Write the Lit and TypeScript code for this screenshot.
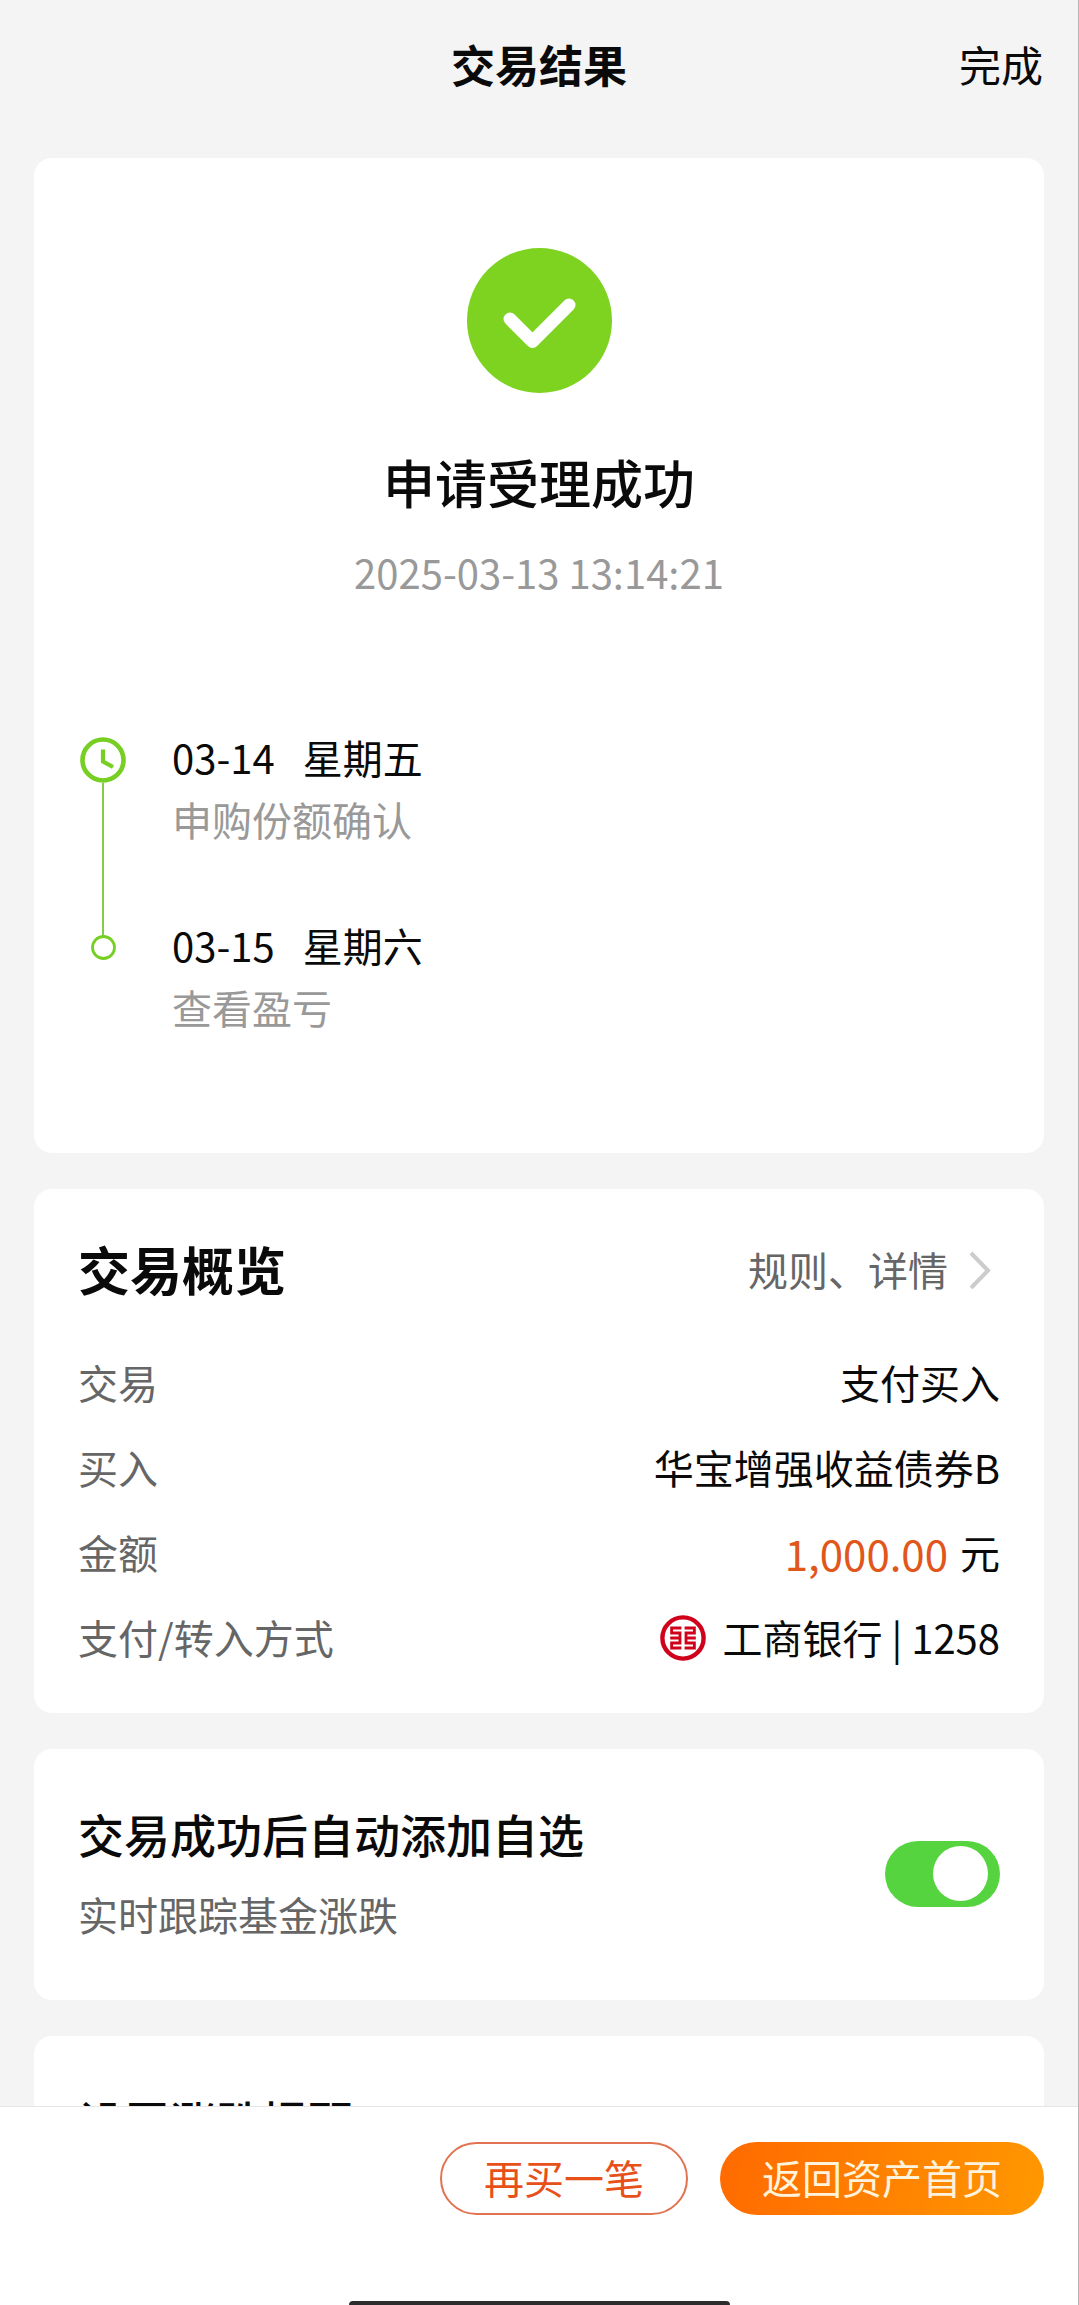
import { LitElement, html, css } from "lit";
import { customElement, state } from "lit/decorators.js";

interface TimelineStep {
  date: string;
  weekday: string;
  note: string;
}

const STEPS: TimelineStep[] = [
  { date: "03-14", weekday: "星期五", note: "申购份额确认" },
  { date: "03-15", weekday: "星期六", note: "查看盈亏" },
];

const successIcon = html`<svg class="success" viewBox="0 0 145 145" aria-hidden="true">
  <circle cx="72.5" cy="72.5" r="72.5" fill="#7ed321" />
  <path d="M43 71 65.5 93.5 102 57" fill="none" stroke="#fff" stroke-width="13" stroke-linecap="round" stroke-linejoin="round" />
</svg>`;

const clockIcon = html`<svg class="clock" viewBox="0 0 46 46" aria-hidden="true">
  <circle cx="23" cy="23" r="20.5" fill="none" stroke="#76cf22" stroke-width="4.6" />
  <path d="M23 12.5V24.5L33 30" fill="none" stroke="#76cf22" stroke-width="4.2" />
</svg>`;

const dotIcon = html`<svg class="dot" viewBox="0 0 25 25" aria-hidden="true">
  <circle cx="12.5" cy="12.5" r="11" fill="none" stroke="#76cf22" stroke-width="2.8" />
</svg>`;

const bankIcon = html`<svg class="bank" viewBox="0 0 46 46" aria-hidden="true">
  <circle cx="23" cy="23" r="20.6" fill="none" stroke="#d0021b" stroke-width="4.4" />
  <g fill="none" stroke="#d0021b" stroke-width="2.8">
    <path d="M21.4 13H11.6V18H20V28H11.6V33H21.4" />
    <path d="M24.6 13H34.4V18H26V28H34.4V33H24.6" />
    <path d="M10.2 23H20M26 23H35.8" />
  </g>
</svg>`;

@customElement("app-root")
export class AppRoot extends LitElement {
  @state() private autoWatch = true;

  static styles = css`
    :host {
      display: block;
      font-family: "Noto Sans CJK SC", "Noto Sans", sans-serif;
      font-size: 40px;
      line-height: 60px;
      color: #0a0a0a;
    }
    *, *::before, *::after { box-sizing: border-box; }
    h1, h2, h3, p, ol, dl, dd { margin: 0; padding: 0; }
    button { font: inherit; color: inherit; background: none; border: 0; padding: 0; margin: 0; cursor: pointer; }
    svg { display: block; flex: none; }

    .page {
      display: flex;
      flex-direction: column;
      height: 100vh;
      background: #f4f4f4;
      border-right: 1px solid #b4b4b4;
    }
    .header {
      flex: none;
      display: grid;
      grid-template-columns: 1fr auto 1fr;
      align-items: center;
      height: 127px;
      padding: 0 35px;
    }
    .header h1 { grid-column: 2; font-size: 44px; font-weight: 700; }
    .done { justify-self: end; font-size: 42px; }

    .content {
      flex: 1;
      min-height: 0;
      overflow-y: auto;
      scrollbar-width: none;
      display: flex;
      flex-direction: column;
      gap: 36px;
      padding: 31px 34px 36px;
    }
    .card { flex: none; background: #fff; border-radius: 18px; }

    .result {
      display: flex;
      flex-direction: column;
      align-items: center;
      padding: 90px 46px 115px;
    }
    .success { width: 145px; height: 145px; }
    .result h2 { margin-top: 59px; font-size: 52px; font-weight: 500; }
    .time { margin-top: 30px; font-size: 40px; color: #999; }
    .timeline { align-self: stretch; display: flex; gap: 46px; margin-top: 124px; line-height: 62px; }
    .track {
      flex: none;
      display: flex;
      flex-direction: column;
      align-items: center;
      width: 46px;
      padding: 11px 0 78px;
    }
    .clock { width: 46px; height: 46px; }
    .line { flex: 1; width: 2px; background: #86cb46; }
    .dot { width: 25px; height: 25px; }
    .steps { list-style: none; display: flex; flex-direction: column; gap: 64px; }
    .when { display: flex; gap: 28px; }
    .note { color: #999; }

    .overview { padding: 43px 44px 33px; }
    .overview-head { display: flex; align-items: center; justify-content: space-between; margin-bottom: 34px; line-height: 74px; }
    .overview-head h2 { font-size: 52px; font-weight: 700; }
    .detail { display: flex; align-items: center; gap: 20px; padding-right: 8px; color: #666; text-decoration: none; }
    .chevron { width: 24px; height: 40px; }
    .row { display: flex; align-items: center; justify-content: space-between; line-height: 85px; }
    .row dt { color: #666; }
    .row dd { display: flex; align-items: center; }
    .amount { margin-right: 12px; font-size: 42px; color: #e0561b; }
    .bank { width: 46px; height: 46px; margin-right: 16px; }

    .setting { display: flex; align-items: center; justify-content: space-between; padding: 54px 44px 56px; }
    .setting h3 { margin-bottom: 21px; font-size: 46px; font-weight: 500; }
    .setting p { color: #666; }
    .switch {
      appearance: none;
      flex: none;
      display: flex;
      align-items: center;
      width: 115px;
      height: 66px;
      margin: 0;
      padding: 0 12px;
      border-radius: 33px;
      background: #ddd;
      cursor: pointer;
    }
    .switch::before { content: ""; width: 55px; height: 55px; border-radius: 50%; background: #fff; }
    .switch:checked { justify-content: flex-end; background: #55d43f; }

    .footer { flex: none; background: #fff; border-top: 1px solid #e6e6e6; }
    .actions { display: flex; justify-content: flex-end; gap: 32px; padding: 35px 34px 86px; }
    .btn { display: flex; align-items: center; height: 73px; padding: 0 42px 4px; border-radius: 37px; line-height: 60px; }
    .again { border: 2px solid #e27352; color: #e8501a; }
    .home { background: linear-gradient(100deg, #ff6a00, #ff9800); color: #fff3dc; }
    .indicator { width: 381px; height: 4px; margin: 0 auto; border-radius: 4px 4px 0 0; background: #2c2c2e; }
  `;

  private toggle(e: Event) {
    this.autoWatch = (e.target as HTMLInputElement).checked;
  }

  render() {
    return html`
      <div class="page">
        <header class="header">
          <h1>交易结果</h1>
          <button class="done" type="button">完成</button>
        </header>
        <main class="content">
          <section class="card result">
            ${successIcon}
            <h2>申请受理成功</h2>
            <p class="time">2025-03-13 13:14:21</p>
            <div class="timeline">
              <div class="track">${clockIcon}<div class="line"></div>${dotIcon}</div>
              <ol class="steps">
                ${STEPS.map(
                  (s) => html`<li>
                    <div class="when"><span>${s.date}</span><span>${s.weekday}</span></div>
                    <div class="note">${s.note}</div>
                  </li>`
                )}
              </ol>
            </div>
          </section>

          <section class="card overview">
            <div class="overview-head">
              <h2>交易概览</h2>
              <a class="detail" href="#detail">规则、详情
                <svg class="chevron" viewBox="0 0 24 40" aria-hidden="true">
                  <path d="M3 4 20 21.5 3 39" fill="none" stroke="#ccc" stroke-width="4" />
                </svg>
              </a>
            </div>
            <dl>
              <div class="row"><dt>交易</dt><dd>支付买入</dd></div>
              <div class="row"><dt>买入</dt><dd>华宝增强收益债券B</dd></div>
              <div class="row"><dt>金额</dt><dd><span class="amount">1,000.00</span>元</dd></div>
              <div class="row"><dt>支付/转入方式</dt><dd>${bankIcon}工商银行 | 1258</dd></div>
            </dl>
          </section>

          <section class="card setting">
            <label for="auto-watch">
              <h3>交易成功后自动添加自选</h3>
              <p>实时跟踪基金涨跌</p>
            </label>
            <input id="auto-watch" class="switch" type="checkbox" role="switch" .checked=${this.autoWatch} @change=${this.toggle} />
          </section>

          <section class="card setting">
            <h3>设置涨跌提醒</h3>
          </section>
        </main>
        <footer class="footer">
          <div class="actions">
            <button class="btn again" type="button">再买一笔</button>
            <button class="btn home" type="button">返回资产首页</button>
          </div>
          <div class="indicator"></div>
        </footer>
      </div>
    `;
  }
}
